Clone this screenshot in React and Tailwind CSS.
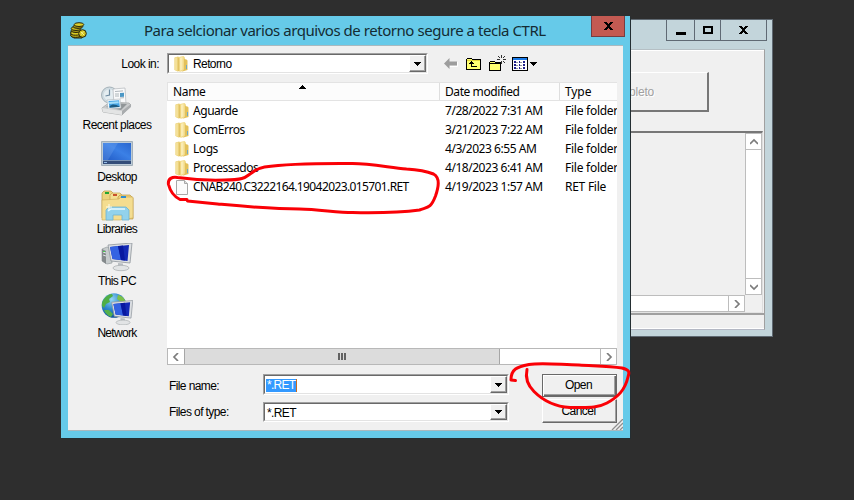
import React from "react";

const ui = "font-['Noto_Sans',sans-serif]";
const classic = "font-['Liberation_Sans',sans-serif]";

function Folder({ className = "" }) {
  return (
    <svg className={`h-[16px] w-[14px] shrink-0 ${className}`} viewBox="0 0 14 16">
      <path d="M.5 1.500L4 .5l2 1V15l-2.500.5-3-1.500z" fill="#ecd278" />
      <path d="M.5 2L3 1.300v13.200L.5 14z" fill="#f4e09a" />
      <path d="M5 1l4.500-1L11 1.500V14l-5.500 2z" fill="#f2da88" />
      <path d="M6 1.800L8.500 1v12.500L6 14.700z" fill="#faecb4" />
      <path d="M10 3l2.500.5 1 1V14L7.500 15.700 10 13.500z" fill="#e3c15a" />
      <path d="M4.600 2v13" stroke="#dcbc5c" strokeWidth=".8" />
      <path d="M12.500 9v4" stroke="#6fa9c4" strokeWidth="1" />
    </svg>
  );
}

function FileIcon() {
  return (
    <svg className="h-[16px] w-[14px] shrink-0" viewBox="0 0 14 16">
      <path d="M1.500 1.500h8l3 3v11h-11z" fill="#fbfbfb" stroke="#a8a8a8" />
      <path d="M9.500 1.500v3h3" fill="#ddd" stroke="#a8a8a8" />
    </svg>
  );
}

function Coins() {
  return (
    <svg className="h-[17px] w-[17px]" viewBox="0 0 17 17" stroke="#28250a" strokeWidth="1">
      <path d="M1 9v5l3 2h8l2-3V9z" fill="#968b10" />
      <ellipse cx="5.500" cy="13.200" rx="4.800" ry="2.200" fill="#b9ac18" />
      <ellipse cx="5.500" cy="11" rx="4.800" ry="2.200" fill="#d8cb24" />
      <ellipse cx="6" cy="8.500" rx="4.800" ry="2" fill="#a89b15" />
      <ellipse cx="6" cy="6.500" rx="4.800" ry="2" fill="#c9bc20" />
      <ellipse cx="8" cy="4.500" rx="4.800" ry="1.900" fill="#9c9013" />
      <ellipse cx="9" cy="2.600" rx="4.800" ry="1.900" fill="#ded22b" />
      <circle cx="12.500" cy="11.500" r="3.800" fill="#d0c220" />
      <path d="M11 10l3 3M11.500 12.500l2-3" stroke="#f8f28a" />
    </svg>
  );
}

function Monitor() {
  return (
    <g>
      <path d="M7 2l24-2-2 20-19-2z" fill="#dcdfe2" stroke="#8f969c" strokeWidth=".8" />
      <path d="M9 4l19-2-1.500 16-15-2z" fill="#1329b5" />
      <path d="M9 4l8-1 3 14-8.500-1z" fill="#3463e2" />
      <path d="M17 3l5-.5 2 15-4-.5z" fill="#0818a0" />
      <path d="M17 20l5 .5v4h-5z" fill="#b9bec2" />
      <ellipse cx="20" cy="25" rx="8" ry="2.700" fill="#e2e4e5" stroke="#a6abae" strokeWidth=".7" />
    </g>
  );
}

function RecentIcon() {
  return (
    <svg className="h-[30px] w-[32px]" viewBox="0 0 32 30">
      <circle cx="8.500" cy="9" r="8" fill="#cfdbe1" stroke="#a5b2b9" />
      <circle cx="8.500" cy="9" r="5.800" fill="#e4edf1" />
      <path d="M8.500 3.500V9l-4 1" fill="none" stroke="#6d8aa0" strokeWidth="1.200" />
      <path d="M12 3l12-1 1 16-12 1z" fill="#f9fafb" stroke="#b2b6ba" strokeWidth=".7" />
      <path d="M14 5.500l8-.6M14 8h4M14 10h4M19 12l4-.3" stroke="#9ba3aa" strokeWidth=".8" />
      <path d="M19 7l4-.3v4l-4 .3z" fill="#4b97c5" />
      <path d="M1 22l8-6 19 1 2 2-9 10-19-3z" fill="#c9cbcc" stroke="#a0a3a4" strokeWidth=".7" />
      <path d="M5 21l6-4 15 1-6 6z" fill="#909597" />
      <path d="M6 14l13-1 1 9-13 1z" fill="#f8fbfd" stroke="#adb5ba" strokeWidth=".6" />
      <path d="M7.500 15l10.500-.8.900 6.500-10.500.9z" fill="#46a4e5" />
      <path d="M8.500 20.500c3-3 6-2 10 0v.5l-10 .7z" fill="#1c5c84" />
      <path d="M8 16l9.500-.7.300 2-9.500.7z" fill="#a4ddf8" />
      <path d="M1 22l20 3v4L2 26z" fill="#e3e4e4" />
      <path d="M21 25l9-7v3l-9 8z" fill="#a9acae" />
    </svg>
  );
}

function DesktopIcon() {
  return (
    <svg className="h-[25px] w-[32px]" viewBox="0 0 32 25">
      <defs>
        <linearGradient id="desk" x1="0" y1="1" x2="1" y2="0">
          <stop offset="0" stopColor="#2059c4" />
          <stop offset=".55" stopColor="#3b80e6" />
          <stop offset="1" stopColor="#2966cf" />
        </linearGradient>
      </defs>
      <path d="M.5.500h31v24H.500z" fill="#bccbd7" stroke="#a3b0ba" />
      <path d="M2 2h28v17H2z" fill="url(#desk)" />
      <path d="M2 2h15L7 19H2z" fill="#83b5f4" opacity=".25" />
      <path d="M2 19h28v4H2z" fill="#344d79" />
      <path d="M2 19.500h28" stroke="#7893b6" />
      <path d="M3 21h3v1H3z" fill="#93bce9" />
    </svg>
  );
}

function LibrariesIcon() {
  return (
    <svg className="h-[31px] w-[33px]" viewBox="0 0 33 31">
      <path d="M1 28V3l2-2h7l2 2v25z" fill="#ecd47d" stroke="#b99a45" strokeWidth=".7" />
      <path d="M9 28V5l2-2h8l2 2v23z" fill="#f4df92" stroke="#c0a252" strokeWidth=".7" />
      <path d="M17 29V7l2-2h10l3 3v21z" fill="#eed17a" stroke="#bd9a42" strokeWidth=".7" />
      <path d="M1 10l17-1 2-2h12v21l-13 2H1z" fill="#f4dd90" stroke="#c9aa55" strokeWidth=".6" />
      <path d="M4 2h4v2H4z" fill="#23a532" />
      <path d="M12 4h4v2h-4z" fill="#c8502c" />
      <path d="M20 6h5v2h-5z" fill="#2e8ed1" />
      <path d="M5 30v-10l3-3h17l3 3v10h-7v-5h-9v5z" fill="#92d2ec" stroke="#6fb3d0" strokeWidth=".8" />
      <path d="M7 21l3-2h14" stroke="#e8faff" fill="none" strokeWidth="1.500" />
      <path d="M8 14v6M5 17h6" stroke="#fffce9" strokeWidth="1" />
    </svg>
  );
}

function PcIcon() {
  return (
    <svg className="h-[29px] w-[32px]" viewBox="0 0 32 29">
      <path d="M1 6l5-2 5 2v14l-5 1-5-3z" fill="#c7cccd" stroke="#969da0" strokeWidth=".7" />
      <path d="M1 6l4 2v13l-4-3z" fill="#84898b" />
      <path d="M2 9l3 1M2 12l3 1" stroke="#dfe4e5" />
      <path d="M2 8h2v1H2z" fill="#48cd4e" />
      <Monitor />
    </svg>
  );
}

function NetworkIcon() {
  return (
    <svg className="h-[32px] w-[32px]" viewBox="0 0 32 32">
      <defs>
        <radialGradient id="globe" cx=".4" cy=".25" r=".8">
          <stop offset="0" stopColor="#94d7f5" />
          <stop offset=".5" stopColor="#2f88cc" />
          <stop offset="1" stopColor="#0b4b92" />
        </radialGradient>
      </defs>
      <circle cx="13" cy="12.500" r="12.300" fill="url(#globe)" />
      <path d="M3 6c2-3 5-5 8-5l1 2-4 3 1 3-4 2-2 4-2-2c-.5-3 .5-5 2-7z" fill="#4fae45" />
      <path d="M17 2c5 1 8 5 8 9l-5-2-4-3z" fill="#7cc14a" />
      <path d="M3 17l5 0 4 4-2 3c-3-1-6-4-7-7z" fill="#55b04b" />
      <g transform="translate(4.500 7.500) scale(.88)">
        <Monitor />
      </g>
    </svg>
  );
}

function DropButton() {
  return (
    <div className="flex h-full w-[17px] shrink-0 items-center justify-center border border-t-white border-l-white border-r-[#696969] border-b-[#696969] bg-[#f0f0f0] shadow-[inset_-1px_-1px_0_#a0a0a0]">
      <svg className="h-[4px] w-[7px]" viewBox="0 0 7 4" shapeRendering="crispEdges">
        <path d="M0 0h7v1H6v1H5v1H4v1H3V3H2V2H1V1H0z" />
      </svg>
    </div>
  );
}

function Combo({ className, children }) {
  return (
    <div className={`border border-t-[#a0a0a0] border-l-[#a0a0a0] border-r-white border-b-white ${className}`}>
      <div className="flex h-full items-center border border-t-[#696969] border-l-[#696969] border-r-[#e3e3e3] border-b-[#e3e3e3] bg-white">
        <div className="flex min-w-0 flex-1 items-center">{children}</div>
        <DropButton />
      </div>
    </div>
  );
}

function Chevron({ d }) {
  return (
    <svg className="h-[8px] w-[8px]" viewBox="0 0 8 8" fill="none" stroke="#7c7c7c" strokeWidth="1.700">
      <path d={d} />
    </svg>
  );
}

const LEFT = "M6 0L2 4l4 4";
const RIGHT = "M2 0l4 4-4 4";
const UP = "M0 6l4-4 4 4";
const DOWN = "M0 2l4 4 4-4";

function CloseX() {
  return (
    <svg className="h-[8px] w-[9px]" viewBox="0 0 9 8" shapeRendering="crispEdges">
      <path d="M0 0h3v1h1v1h1V1h1V0h3v1H8v1H7v1H6v2h1v1h1v1h1v1H6V7H5V6H4v1H3v1H0V7h1V6h1V5h1V3H2V2H1V1H0z" />
    </svg>
  );
}

const places = [
  { label: "Recent places", icon: <RecentIcon />, spacing: "tracking-[-0.55px]" },
  { label: "Desktop", icon: <DesktopIcon />, spacing: "tracking-[-0.68px]" },
  { label: "Libraries", icon: <LibrariesIcon />, spacing: "tracking-[-0.62px]" },
  { label: "This PC", icon: <PcIcon />, spacing: "tracking-[-0.7px]" },
  { label: "Network", icon: <NetworkIcon />, spacing: "tracking-[-0.68px]" },
];

const files = [
  { name: "Aguarde", date: "7/28/2022 7:31 AM", type: "File folder" },
  { name: "ComErros", date: "3/21/2023 7:22 AM", type: "File folder" },
  { name: "Logs", date: "4/3/2023 6:55 AM", type: "File folder" },
  { name: "Processados", date: "4/18/2023 6:41 AM", type: "File folder" },
  { name: "CNAB240.C3222164.19042023.015701.RET", date: "4/19/2023 1:57 AM", type: "RET File" },
];

function Toolbar() {
  return (
    <div className="flex h-[21px] items-center pl-[16px]">
      <svg className="h-[11px] w-[14px]" viewBox="0 0 14 11">
        <path d="M6 8.500h7.500V4" fill="none" stroke="#fff" />
        <path d="M0 5.500L5.500 0v3.500H13v4H5.500V11z" fill="#9d9d9d" />
      </svg>
      <svg className="ml-[8px] h-[14px] w-[16px]" viewBox="0 0 16 14" shapeRendering="crispEdges">
        <path d="M.5 12.500v-10l1-1h4l1 1h8v10z" fill="#ffff72" stroke="#000" />
        <path d="M1 3.500h13" stroke="#e2d638" />
        <path d="M5 4h1v1h1v1h1v1H6v2h5v1H5V7H3V6h1V5h1z" fill="#000" />
      </svg>
      <svg className="ml-[7px] h-[17px] w-[17px]" viewBox="0 0 17 17" shapeRendering="crispEdges">
        <path d="M.5 15.500v-8l1-1h4l1 1h5v8z" fill="#ffff72" stroke="#000" />
        <path d="M1 8.500h10" stroke="#000" />
        <path d="M12 0h1v3h-1zM12 6h1v3h-1zM8 4h3v1H8zM14 4h3v1h-3zM9 1h1v1H9zM15 1h1v1h-1zM15 7h1v1h-1zM10 2h1v1h-1zM14 2h1v1h-1zM14 6h1v1h-1z" fill="#333" />
      </svg>
      <svg className="ml-[6px] h-[14px] w-[16px]" viewBox="0 0 16 14" shapeRendering="crispEdges">
        <path d="M.5.500h15v13H.500z" fill="#fff" stroke="#000" />
        <path d="M1 1h14v2H1z" fill="#1b7be9" />
        <path d="M2 4h2v2H2zM7 4h1v2H7zM11 4h2v2h-2zM2 7h2v2H2zM7 7h1v2H7zM11 7h2v2h-2zM2 10h2v2H2zM7 10h1v2H7zM11 10h2v2h-2z" fill="#20208c" />
        <path d="M4 5.500h2M8 5.500h2M4 8.500h2M8 8.500h2M4 11.500h2M8 11.500h2" stroke="#92929c" />
      </svg>
      <svg className="ml-[2px] h-[4px] w-[7px]" viewBox="0 0 7 4" shapeRendering="crispEdges">
        <path d="M0 0h7v1H6v1H5v1H4v1H3V3H2V2H1V1H0z" />
      </svg>
    </div>
  );
}

function FileList() {
  return (
    <div className={`flex h-[283px] w-[450px] flex-col overflow-hidden bg-white text-[12px] ${ui}`}>
      <div className="flex h-[19px] shrink-0 items-center border border-r-0 border-[#e3e3e3] bg-[#fcfcfc] leading-[17px] whitespace-nowrap">
        <div className="flex h-full w-[272px] shrink-0 border-r border-[#dedede] pl-[5px]">
          <span className="w-[126px] tracking-[-0.35px]">Name</span>
          <svg className="mt-[2px] h-[4px] w-[7px]" viewBox="0 0 7 4" shapeRendering="crispEdges">
            <path d="M3 0h1v1h1v1h1v1h1v1H0V3h1V2h1V1h1z" />
          </svg>
        </div>
        <div className="h-full w-[120px] shrink-0 border-r border-[#dedede] pl-[5px] tracking-[-0.42px]">Date modified</div>
        <div className="pl-[5px] tracking-[-0.1px]">Type</div>
      </div>
      <div className="flex-1">
        {files.map((f, i) => (
          <div key={f.name} className="flex h-[19px] items-center leading-[19px] whitespace-nowrap">
            <div className="flex w-[278px] shrink-0 items-center gap-[4px] pl-[8px]">
              {i < 4 ? <Folder /> : <FileIcon />}
              <span className={i < 4 ? "tracking-[-0.46px]" : "tracking-[-0.61px]"}>{f.name}</span>
            </div>
            <span className="w-[120px] shrink-0 tracking-[-0.46px]">{f.date}</span>
            <span className="shrink-0 tracking-[-0.26px]">{f.type}</span>
          </div>
        ))}
      </div>
      <div className="flex h-[17px] shrink-0 border border-[#b8b8b8]">
        <div className="flex w-[16px] items-center justify-center"><Chevron d={LEFT} /></div>
        <div className="flex w-[316px] items-center justify-center gap-[1px] border-x border-[#a6a6a6] bg-[#dcdcdc]">
          <i className="h-[7px] w-[2px] bg-[#626262]" />
          <i className="h-[7px] w-[2px] bg-[#626262]" />
          <i className="h-[7px] w-[2px] bg-[#626262]" />
        </div>
        <div className="flex-1" />
        <div className="flex w-[16px] items-center justify-center border-l border-[#b8b8b8]"><Chevron d={RIGHT} /></div>
      </div>
    </div>
  );
}

function OpenDialog() {
  return (
    <div className="absolute top-[16px] left-[61px] flex h-[422px] w-[569px] flex-col bg-[#66cae9] px-[7px] pb-[7px] shadow-[1px_1px_0_#242e32]">
      <div className="-mr-[2px] flex h-[29px] shrink-0">
        <div className="w-[76px] shrink-0 pt-[6px] pl-[2px]"><Coins /></div>
        <div className={`w-[447px] shrink-0 text-[15px] leading-[28px] tracking-[-0.46px] whitespace-nowrap text-[#142c33] ${ui}`}>
          Para selcionar varios arquivos de retorno segure a tecla CTRL
        </div>
        <div className="flex h-[21px] w-[34px] shrink-0 items-center justify-center border border-t-0 border-[#773d41] bg-[#c35a52]"><CloseX /></div>
      </div>
      <div className={`flex h-[386px] flex-col border-t border-b border-t-[#a9b9bf] border-b-[#a9b9bf] bg-[#f0f0f0] text-[12px] text-black ${classic}`}>
        <div className="flex h-[36px] shrink-0 pt-[7px]">
          <span className="w-[99px] pr-[8px] text-right leading-[22px] tracking-[-0.55px]">Look in:</span>
          <Combo className="h-[21px] w-[261px]">
            <Folder className="ml-[5px]" />
            <span className="ml-[5px] pt-px tracking-[-0.6px]">Retorno</span>
          </Combo>
          <Toolbar />
        </div>
        <div className="flex">
          <div className="flex w-[99px] flex-col pr-[1px]">
            {places.map((p) => (
              <div key={p.label} className="flex h-[52px] flex-col items-center">
                <div className="flex h-[36px] items-center pt-[2px]">{p.icon}</div>
                <span className={`leading-[15px] whitespace-nowrap ${p.spacing}`}>{p.label}</span>
              </div>
            ))}
          </div>
          <FileList />
        </div>
        <div className="flex min-h-0 flex-1 pt-[9px] pl-[101px]">
          <div className="flex w-[94px] flex-col gap-[7px] tracking-[-0.6px]">
            <span className="h-[20px] leading-[25px]">File name:</span>
            <span className="h-[20px] leading-[23px]">Files of type:</span>
          </div>
          <div className="flex w-[246px] flex-col gap-[7px]">
            <Combo className="h-[21px]">
              <span className="mt-px ml-[1px] border-r border-[#c76a20] bg-[#3399ff] pl-[1px] leading-[13px] tracking-[-0.7px] text-white">*.RET</span>
            </Combo>
            <Combo className="h-[20px]">
              <span className="ml-[2px] pt-px tracking-[-0.6px]">*.RET</span>
            </Combo>
          </div>
          <div className="ml-[33px] flex w-[75px] flex-col gap-[2px] tracking-[-0.55px]">
            <div className="flex h-[23px] items-center justify-center border border-[#696969] bg-[#f0f0f0] pr-[2px] pb-[1px] shadow-[inset_1px_1px_0_#fff,inset_-1px_-1px_0_#696969,inset_-2px_-2px_0_#a0a0a0]">Open</div>
            <div className="flex h-[24px] items-center justify-center border border-t-white border-l-white border-r-[#696969] border-b-[#696969] bg-[#f0f0f0] pr-[2px] shadow-[inset_-1px_-1px_0_#a0a0a0]">Cancel</div>
          </div>
          <svg className="-ml-[6px] h-[11px] w-[12px] self-end" viewBox="0 0 12 11">
            <path d="M1 11L12 0M5 11l7-7M9 11l3-3" stroke="#8f8f8f" strokeWidth="1.300" />
          </svg>
        </div>
      </div>
    </div>
  );
}

function BackWindow() {
  return (
    <div className="absolute top-[19px] left-[600px] flex h-[318px] w-[173px] flex-col border border-[#5f6972] bg-[#c3d5db] pr-[7px]">
      <div className="flex h-[29px] shrink-0 justify-end">
        <div className="-mr-[2px] flex h-[21px] border border-t-0 border-[#606a74]">
          <div className="flex w-[27px] items-center justify-center pt-[6px]"><i className="h-[3px] w-[10px] bg-black" /></div>
          <div className="flex w-[27px] items-center justify-center border-x border-[#606a74]"><i className="h-[8px] w-[10px] border-2 border-black" /></div>
          <div className="flex w-[45px] items-center justify-center"><CloseX /></div>
        </div>
      </div>
      <div className="flex h-[281px] flex-col border-t border-r border-b border-t-[#b5bfc4] border-r-[#a0a0a0] border-b-[#b4b8c4] bg-[#f0f0f0]">
        <div className="h-[81px] shrink-0 border-t border-white pt-[21px]">
          <div className={`flex h-[40px] w-[108px] items-center justify-end border-t border-r-2 border-b-2 border-t-white border-r-[#777] border-b-[#777] pr-[53px] text-[12px] tracking-[-0.2px] text-[#a0a0a0] [text-shadow:1px_1px_0_#fff] ${classic}`}>Completo</div>
        </div>
        <div className="mr-[1px] flex h-[182px] shrink-0 flex-col border-t-2 border-r border-b border-t-[#777] border-r-[#ddd] border-b-[#e3e3e3]">
          <div className="flex h-[162px] shrink-0 justify-end">
            <div className="flex w-[17px] flex-col border border-[#bdbdbd] bg-white">
              <div className="flex h-[16px] items-center justify-center border-b border-[#bdbdbd]"><Chevron d={UP} /></div>
              <div className="flex-1" />
              <div className="flex h-[16px] items-center justify-center border-t border-[#bdbdbd]"><Chevron d={DOWN} /></div>
            </div>
          </div>
          <div className="mr-[17px] flex h-[17px] justify-end border border-[#bdbdbd] bg-white">
            <div className="flex w-[16px] items-center justify-center border-l border-[#bdbdbd]"><Chevron d={RIGHT} /></div>
          </div>
        </div>
        <div className="flex-1 border-t-2 border-b border-t-[#a0a0a0] border-b-white" />
      </div>
    </div>
  );
}

function Annotations() {
  return (
    <svg className="absolute top-0 left-0 h-[500px] w-[854px]" viewBox="0 0 854 500" fill="none" stroke="#fa0006" strokeWidth="3" strokeLinecap="round" strokeLinejoin="round">
      <path d="M187 199.500h-7c-6-3-10-9-11.500-15-1-6 4-8 9-7 15 2 33 3 47 2.500 21 0 21-3 27-7 4-3 7-5 13-6 27-4 56-3.500 88-3.500 18 0 37 4 54 5.500 16 1 22 3 27 5 7 4 5 13 2 22-5 13-8 11-16 14-15 2-42 3-67 2.500-15 0-33-3-53-3.500-29 0-60-3-82-5l-30-3" />
      <path d="M515.500 380.500l-4.500-.5c0-11 6-13 18-15.500 12-2 30 0 50 .5 17 1 30 1 43 3 7 2 8 3 6 9-3 13-10 20-21 26-11 6-23 4-37 4.500-17-1-28-8-36-16-6-6-9-13-7-22" />
    </svg>
  );
}

export default function App() {
  return (
    <div className="relative h-[500px] w-[854px] overflow-hidden bg-[#2e2e2e] text-black">
      <BackWindow />
      <OpenDialog />
      <Annotations />
    </div>
  );
}
